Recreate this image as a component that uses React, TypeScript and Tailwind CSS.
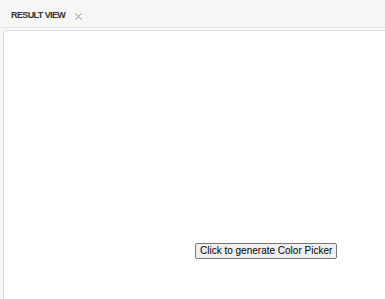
import { X } from 'lucide-react';

export default function App() {
  return (
    <div className="w-[385px] h-[299px] bg-[#f7f7f7] flex flex-col overflow-hidden" style={{ fontFamily: '"Liberation Sans", Arial, sans-serif' }}>
      <div className="h-[28px] flex items-center pl-[11px] gap-[8px] border-b border-[#e3e3e8] shrink-0">
        <span className="text-[9px] font-bold text-[#333] tracking-[-0.6px] pt-[5px]">RESULT VIEW</span>
        <X size={11} strokeWidth={1.8} className="text-[#7a7a7a] mt-[5px]" />
      </div>
      <div className="flex-1 pt-[2px] pl-[3px]">
        <div className="h-full flex items-start bg-white border-l border-t border-[#dcdcdc] rounded-tl-[4px] pl-[191px] pt-[212px]">
          <button className="h-[16px] px-[4px] text-[10px] leading-none text-black bg-[#efefef] border border-[#767676] rounded-[2px]">
            Click to generate Color Picker
          </button>
        </div>
      </div>
    </div>
  );
}
